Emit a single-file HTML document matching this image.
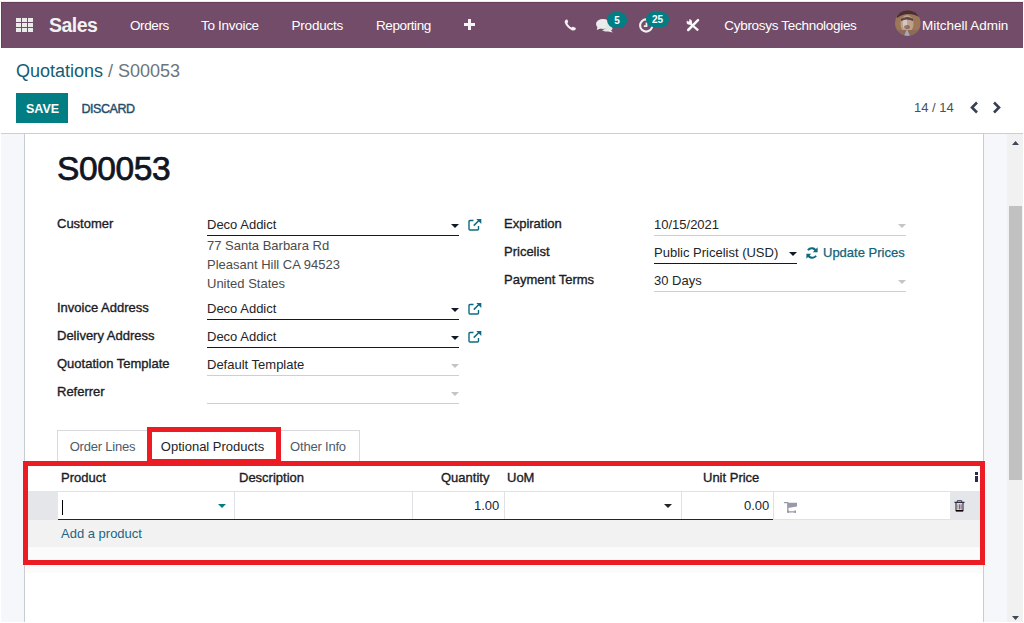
<!DOCTYPE html>
<html><head><meta charset="utf-8">
<style>
*{margin:0;padding:0;box-sizing:border-box}
html,body{width:1024px;height:623px;overflow:hidden;background:#fff;font-family:"Liberation Sans",sans-serif;color:#212529}
.a{position:absolute;white-space:nowrap}
#nav{left:1px;top:2px;width:1022px;height:46px;background:#724c68;border-top:1px solid #683e5d;border-left:1px solid #683e5d}
.nt{color:#fff;font-size:13.5px;top:18px}
#cp{left:1px;top:48px;width:1022px;height:86px;background:#fff;border-bottom:1px solid #cbced6}
#bg{left:1px;top:134px;width:1006px;height:488px;background:#f6f7fa}
#sheet{left:24px;top:134px;width:960px;height:488px;background:#fff;border-left:1px solid #c8ccd3;border-right:1px solid #c8ccd3}
#sb{left:1007px;top:134px;width:16px;height:488px;background:#f1f1f1}
.lbl{font-size:13px;color:#1a1d27;-webkit-text-stroke:0.35px #1a1d27}
.val{font-size:13px;color:#212529}
.ul{height:1px;background:#141824}
.uld{height:1px;background:#cfcfd1}
.red{border:5px solid #ec1c24}
</style></head><body>
<!-- navbar -->
<div class="a" style="left:0;top:1px;width:1024px;height:1px;background:#e9edef"></div>
<div class="a" id="nav"></div>
<svg class="a" style="left:16px;top:18px" width="17" height="14" viewBox="0 0 17 14">
<g fill="#ebebeb">
<rect x="0" y="0" width="5" height="4"/><rect x="6" y="0" width="5" height="4"/><rect x="12" y="0" width="5" height="4"/>
<rect x="0" y="5" width="5" height="4"/><rect x="6" y="5" width="5" height="4"/><rect x="12" y="5" width="5" height="4"/>
<rect x="0" y="10" width="5" height="4"/><rect x="6" y="10" width="5" height="4"/><rect x="12" y="10" width="5" height="4"/>
</g></svg>
<div class="a" id="t_sales" style="left:49px;top:14px;font-size:19.5px;font-weight:bold;color:#f2f2f2;letter-spacing:-0.5px">Sales</div>
<div class="a nt" id="t_orders" style="left:130px;letter-spacing:-0.4px">Orders</div>
<div class="a nt" id="t_toinv" style="left:201px;letter-spacing:-0.3px">To Invoice</div>
<div class="a nt" id="t_prod" style="left:291.5px;letter-spacing:-0.2px">Products</div>
<div class="a nt" id="t_rep" style="left:376px;letter-spacing:-0.4px">Reporting</div>
<div class="a" style="left:464px;top:19px;width:11px;height:11px">
 <div class="a" style="left:4px;top:0;width:3px;height:11px;background:#f4f4f4"></div>
 <div class="a" style="left:0;top:4px;width:11px;height:3px;background:#f4f4f4"></div>
</div>
<!-- phone -->
<svg class="a" style="left:564px;top:19px" width="13" height="12" viewBox="0 0 13 12"><path d="M1.3 1.2 C1.8 0.4 2.6 0.2 3.2 0.6 L4.2 2.6 C4.3 3.1 3.9 3.5 3.4 3.9 C3.8 5.6 5.6 7.6 7.6 8.4 C8.1 7.9 8.5 7.6 9 7.7 L11.4 8.8 C12 9.2 12 10 11.3 10.8 C10.5 11.6 9.3 11.8 7.8 11.2 C4.6 9.8 1.8 6.9 0.8 3.8 C0.5 2.7 0.7 1.9 1.3 1.2 Z" fill="#f2f2f2"/></svg>
<!-- chat -->
<svg class="a" style="left:596px;top:19px" width="18" height="14" viewBox="0 0 18 14"><ellipse cx="7" cy="5" rx="7" ry="5" fill="#ececec"/><path d="M1.5 7.5 L0.8 11 L5 9.2 Z" fill="#ececec"/><path d="M10 5.5 C14 5.2 17 7 16.5 9.5 C16.2 10.8 15.5 11.3 15 11.6 L16.8 13.4 L12 12.4 C9.5 12.8 7.2 12.2 6.2 11 C9 10.6 11 8.5 10 5.5 Z" fill="#e4e4e4"/></svg>
<div class="a" style="left:607px;top:12px;width:20px;height:16px;border-radius:8px;background:#017e84;color:#fff;font-size:10px;font-weight:bold;text-align:center;line-height:17px">5</div>
<!-- clock -->
<svg class="a" style="left:639px;top:18px" width="15" height="15" viewBox="0 0 15 15"><circle cx="7.2" cy="7.5" r="6.1" fill="none" stroke="#f0f0f0" stroke-width="2.1"/><path d="M7.5 4.5 V8.2 H4.8" fill="none" stroke="#f0f0f0" stroke-width="1.8"/></svg>
<div class="a" style="left:646px;top:12px;width:23px;height:15px;border-radius:7.5px;background:#017e84;color:#fff;font-size:10px;font-weight:bold;text-align:center;line-height:16px">25</div>
<!-- tools -->
<svg class="a" style="left:686px;top:18px" width="14" height="14" viewBox="0 0 14 14"><path d="M2.2 12 L12 2.2" stroke="#f8f8f8" stroke-width="2.5" stroke-linecap="round"/><path d="M4.5 5.6 L12.2 12.4" stroke="#f8f8f8" stroke-width="2.1"/><circle cx="3.3" cy="4" r="2.7" fill="#f8f8f8"/><path d="M0.2 2.2 L2.6 3.2 L3.4 0.3 Z" fill="#724c68"/><circle cx="2.4" cy="2.4" r="1" fill="#724c68"/></svg>
<div class="a nt" id="t_cyb" style="left:724.3px;letter-spacing:-0.3px">Cybrosys Technologies</div>
<!-- avatar -->
<svg class="a" style="left:895px;top:10px" width="26" height="26" viewBox="0 0 26 26"><defs><clipPath id="cc"><circle cx="12.8" cy="13" r="12.8"/></clipPath></defs><g clip-path="url(#cc)"><rect width="26" height="26" fill="#9c7658"/><path d="M0 0 H26 V8 Q13 0 2 8 Z" fill="#4a2e35"/><ellipse cx="12" cy="14" rx="6.5" ry="9" fill="#bfa08a"/><ellipse cx="10" cy="13" rx="2.2" ry="6" fill="#d9cfd0" opacity="0.8"/><path d="M6 9 Q12 5 18 9 L18 11 Q12 8 6 11 Z" fill="#3e2a2e" opacity="0.8"/><ellipse cx="12" cy="17" rx="3" ry="2" fill="#7a5a48" opacity="0.7"/><rect x="0" y="20" width="26" height="6" fill="#8e6a58"/><path d="M9 26 L12 19 L15 26 Z" fill="#a8a8b8"/></g></svg>
<div class="a nt" id="t_mitch" style="left:922px;letter-spacing:-0.05px">Mitchell Admin</div>

<!-- control panel -->
<div class="a" id="cp"></div>
<div class="a" id="t_bc" style="left:16px;top:61px;font-size:18px;color:#145d72">Quotations <span style="color:#6c757d">/ S00053</span></div>
<div class="a" style="left:16px;top:93px;width:52px;height:30px;background:#017e84"></div>
<div class="a" id="t_save" style="left:26px;top:102px;font-size:12.5px;font-weight:bold;color:#fff">SAVE</div>
<div class="a" id="t_disc" style="left:81.5px;top:102px;font-size:12.5px;color:#234d68;-webkit-text-stroke:0.4px #234d68;letter-spacing:-0.45px">DISCARD</div>
<div class="a" id="t_pager" style="left:914px;top:100px;font-size:13px;color:#495057">14 / 14</div>
<svg class="a" style="left:969px;top:101px" width="10" height="13" viewBox="0 0 10 13"><path d="M8 1.5 L3 6.5 L8 11.5" fill="none" stroke="#374151" stroke-width="2.6"/></svg>
<svg class="a" style="left:991.5px;top:101px" width="10" height="13" viewBox="0 0 10 13"><path d="M2 1.5 L7 6.5 L2 11.5" fill="none" stroke="#374151" stroke-width="2.6"/></svg>

<!-- content -->
<div class="a" id="bg"></div>
<div class="a" id="sheet"></div>
<div class="a" id="sb"></div>
<svg class="a" style="left:1012px;top:141px" width="7" height="4" viewBox="0 0 7 4"><path d="M0 4 L3.5 0 L7 4Z" fill="#3f4758"/></svg>
<div class="a" style="left:1009px;top:206px;width:13px;height:274px;background:#c1c1c1"></div>
<svg class="a" style="left:1012px;top:616px" width="7" height="4" viewBox="0 0 7 4"><path d="M0 0 L3.5 4 L7 0Z" fill="#3f4758"/></svg>

<div class="a" id="t_title" style="left:57px;top:150px;font-size:33.5px;color:#121522;-webkit-text-stroke:0.75px #121522;letter-spacing:-0.35px">S00053</div>

<div class="a lbl" id="l_cust" style="left:57px;top:216px">Customer</div>
<div class="a val" id="v_cust" style="left:207px;top:217px">Deco Addict</div>
<div class="a ul" style="left:207px;top:235px;width:252px"></div>
<div class="a val" style="left:207px;top:238px;color:#4c4c4c">77 Santa Barbara Rd</div>
<div class="a val" style="left:207px;top:257px;color:#4c4c4c">Pleasant Hill CA 94523</div>
<div class="a val" style="left:207px;top:276px;color:#4c4c4c">United States</div>

<div class="a lbl" style="left:57px;top:300px">Invoice Address</div>
<div class="a val" style="left:207px;top:301px">Deco Addict</div>
<div class="a ul" style="left:207px;top:319px;width:252px"></div>
<div class="a lbl" style="left:57px;top:328px">Delivery Address</div>
<div class="a val" style="left:207px;top:329px">Deco Addict</div>
<div class="a ul" style="left:207px;top:347px;width:252px"></div>
<div class="a lbl" style="left:57px;top:356px">Quotation Template</div>
<div class="a val" style="left:207px;top:357px">Default Template</div>
<div class="a uld" style="left:207px;top:375px;width:252px"></div>
<div class="a lbl" style="left:57px;top:384px">Referrer</div>
<div class="a uld" style="left:207px;top:403px;width:252px"></div>

<div class="a lbl" style="left:504px;top:216px">Expiration</div>
<div class="a val" style="left:654px;top:217px">10/15/2021</div>
<div class="a uld" style="left:654px;top:235px;width:252px"></div>
<div class="a lbl" style="left:504px;top:244px">Pricelist</div>
<div class="a val" style="left:654px;top:245px">Public Pricelist (USD)</div>
<div class="a ul" style="left:654px;top:263px;width:143px"></div>
<div class="a val" id="v_upd" style="left:823px;top:245px;color:#13637a;-webkit-text-stroke:0.25px #13637a">Update Prices</div>
<div class="a lbl" style="left:504px;top:272px">Payment Terms</div>
<div class="a val" style="left:654px;top:273px">30 Days</div>
<div class="a uld" style="left:654px;top:291px;width:252px"></div>

<!-- field icons -->
<svg class="a" style="left:451px;top:224px" width="8" height="4" viewBox="0 0 8 4"><path d="M0 0 L8 0 L4 4Z" fill="#111827"/></svg>
<svg class="a" style="left:451px;top:308px" width="8" height="4" viewBox="0 0 8 4"><path d="M0 0 L8 0 L4 4Z" fill="#111827"/></svg>
<svg class="a" style="left:451px;top:336px" width="8" height="4" viewBox="0 0 8 4"><path d="M0 0 L8 0 L4 4Z" fill="#111827"/></svg>
<svg class="a" style="left:451px;top:364px" width="8" height="4" viewBox="0 0 8 4"><path d="M0 0 L8 0 L4 4Z" fill="#c4c4c4"/></svg>
<svg class="a" style="left:451px;top:392px" width="8" height="4" viewBox="0 0 8 4"><path d="M0 0 L8 0 L4 4Z" fill="#c4c4c4"/></svg>
<svg class="a" style="left:898px;top:224px" width="8" height="4" viewBox="0 0 8 4"><path d="M0 0 L8 0 L4 4Z" fill="#c4c4c4"/></svg>
<svg class="a" style="left:898px;top:280px" width="8" height="4" viewBox="0 0 8 4"><path d="M0 0 L8 0 L4 4Z" fill="#c4c4c4"/></svg>
<svg class="a" style="left:789px;top:252px" width="8" height="4" viewBox="0 0 8 4"><path d="M0 0 L8 0 L4 4Z" fill="#111827"/></svg>
<svg class="a" style="left:468px;top:219px" width="14" height="12" viewBox="0 0 14 12"><path d="M5.5 1.5 H2 Q1 1.5 1 2.5 V10 Q1 11 2 11 H9.5 Q10.5 11 10.5 10 V7" fill="none" stroke="#0e6b7f" stroke-width="1.4"/><path d="M5.8 6.6 L11.6 0.8" stroke="#0e6b7f" stroke-width="1.5"/><path d="M8.3 0 H13.3 V5 Z" fill="#0e6b7f"/></svg>
<svg class="a" style="left:468px;top:303px" width="14" height="12" viewBox="0 0 14 12"><path d="M5.5 1.5 H2 Q1 1.5 1 2.5 V10 Q1 11 2 11 H9.5 Q10.5 11 10.5 10 V7" fill="none" stroke="#0e6b7f" stroke-width="1.4"/><path d="M5.8 6.6 L11.6 0.8" stroke="#0e6b7f" stroke-width="1.5"/><path d="M8.3 0 H13.3 V5 Z" fill="#0e6b7f"/></svg>
<svg class="a" style="left:468px;top:331px" width="14" height="12" viewBox="0 0 14 12"><path d="M5.5 1.5 H2 Q1 1.5 1 2.5 V10 Q1 11 2 11 H9.5 Q10.5 11 10.5 10 V7" fill="none" stroke="#0e6b7f" stroke-width="1.4"/><path d="M5.8 6.6 L11.6 0.8" stroke="#0e6b7f" stroke-width="1.5"/><path d="M8.3 0 H13.3 V5 Z" fill="#0e6b7f"/></svg>
<svg class="a" style="left:805.5px;top:246.5px" width="12" height="12" viewBox="0 0 12 12"><path d="M10 4.2 A4.6 4.6 0 0 0 1.9 3.3" fill="none" stroke="#0e6b7f" stroke-width="2"/><path d="M11.6 0.3 V5.2 H6.8 Z" fill="#0e6b7f"/><path d="M2 7.8 A4.6 4.6 0 0 0 10.1 8.7" fill="none" stroke="#0e6b7f" stroke-width="2"/><path d="M0.4 11.7 V6.8 H5.2 Z" fill="#0e6b7f"/></svg>
<!-- tabs -->
<div class="a" style="left:57px;top:430px;width:303px;height:32px;border:1px solid #d8dadd;border-bottom:none"></div>
<div class="a" style="left:57px;top:439px;font-size:13px;color:#4c5b6b;width:91px;text-align:center;letter-spacing:-0.2px">Order Lines</div>
<div class="a" style="left:150.5px;top:439px;font-size:13px;color:#212529;width:124px;text-align:center;letter-spacing:0px">Optional Products</div>
<div class="a" style="left:278.5px;top:439px;font-size:13px;color:#4c5b6b;width:79px;text-align:center;letter-spacing:-0.2px">Other Info</div>
<div class="a red" style="left:147px;top:427px;width:134px;height:37px"></div>

<!-- table -->
<div class="a" style="left:28px;top:466px;width:952px;height:94px;background:#fbfbfb"></div>
<div class="a" style="left:28px;top:466px;width:952px;height:26px;background:#fff;border-bottom:1px solid #dee2e6"></div>
<div class="a lbl" id="h_prod" style="left:61px;top:470px">Product</div>
<div class="a lbl" id="h_desc" style="left:239px;top:470px">Description</div>
<div class="a lbl" id="h_qty" style="left:441px;top:470px">Quantity</div>
<div class="a lbl" id="h_uom" style="left:507px;top:470px">UoM</div>
<div class="a lbl" id="h_up" style="left:703px;top:470px">Unit Price</div>
<div class="a" style="left:975px;top:472.3px;width:3px;height:2.8px;background:#2d2a48"></div>
<div class="a" style="left:975px;top:475.9px;width:3px;height:2.8px;background:#2d2a48"></div>
<div class="a" style="left:975px;top:479.4px;width:3px;height:2.8px;background:#2d2a48"></div>
<!-- row -->
<div class="a" style="left:28px;top:491px;width:30px;height:28.5px;background:#e5e6e9"></div>
<div class="a" style="left:58px;top:492px;width:892px;height:28px;background:#fff"></div>
<div class="a" style="left:950px;top:491px;width:30px;height:28.5px;background:#e5e6e9"></div>
<div class="a" style="left:58px;top:519px;width:715px;height:1px;background:#212529"></div>
<div class="a" style="left:773px;top:519px;width:177px;height:1px;background:#dee2e6"></div>
<div class="a" style="left:234px;top:492px;width:1px;height:27px;background:#dee2e6"></div>
<div class="a" style="left:412px;top:492px;width:1px;height:27px;background:#dee2e6"></div>
<div class="a" style="left:504px;top:492px;width:1px;height:27px;background:#dee2e6"></div>
<div class="a" style="left:681px;top:492px;width:1px;height:27px;background:#dee2e6"></div>
<div class="a" style="left:773px;top:492px;width:1px;height:27px;background:#dee2e6"></div>
<div class="a" style="left:62px;top:500px;width:1px;height:15px;background:#000"></div>
<svg class="a" style="left:218px;top:504px" width="8" height="4" viewBox="0 0 8 4"><path d="M0 0 L8 0 L4 4Z" fill="#017e84"/></svg>
<div class="a val" id="v_qty" style="left:474px;top:498px">1.00</div>
<svg class="a" style="left:664px;top:504px" width="8" height="4" viewBox="0 0 8 4"><path d="M0 0 L8 0 L4 4Z" fill="#212529"/></svg>
<div class="a val" id="v_up" style="left:744px;top:498px">0.00</div>
<svg class="a" style="left:784px;top:502px" width="14" height="11" viewBox="0 0 14 11"><path d="M0 0.5 H3.8 V9.8 H11.5" fill="none" stroke="#979aa8" stroke-width="1.3"/><path d="M3.8 0.8 H13 V4.5 L4 6 Z" fill="#979aa8"/><rect x="3.5" y="8.5" width="1.6" height="2.5" fill="#979aa8"/><rect x="10.4" y="8.5" width="1.6" height="2.5" fill="#979aa8"/></svg>
<svg class="a" style="left:954px;top:499.5px" width="11" height="12" viewBox="0 0 11 12"><path d="M0.5 2.4 H10.5" stroke="#2a2d45" stroke-width="1.3"/><path d="M3.3 2 V0.7 H7.7 V2" fill="none" stroke="#3a3d55" stroke-width="1"/><path d="M2 3 V10.6 H9 V3" fill="none" stroke="#2a2d45" stroke-width="1.1"/><path d="M2 10.8 H9" stroke="#000" stroke-width="1.4"/><path d="M3.9 4.3 V9.4" stroke="#a0785a" stroke-width="0.9"/><path d="M5.5 4.3 V9.4" stroke="#8a4a7a" stroke-width="0.9"/><path d="M7.1 4.3 V9.4" stroke="#9b2a62" stroke-width="0.9"/></svg>
<!-- add row -->
<div class="a" style="left:28px;top:520px;width:952px;height:27px;background:#f2f2f2"></div>
<div class="a val" id="v_add" style="left:61px;top:526px;color:#1c6580">Add a product</div>
<div class="a" style="left:25px;top:565px;width:958px;height:8px;background:#fbfbfb"></div>
<div class="a red" style="left:23px;top:461px;width:962px;height:104px"></div>
</body></html>
